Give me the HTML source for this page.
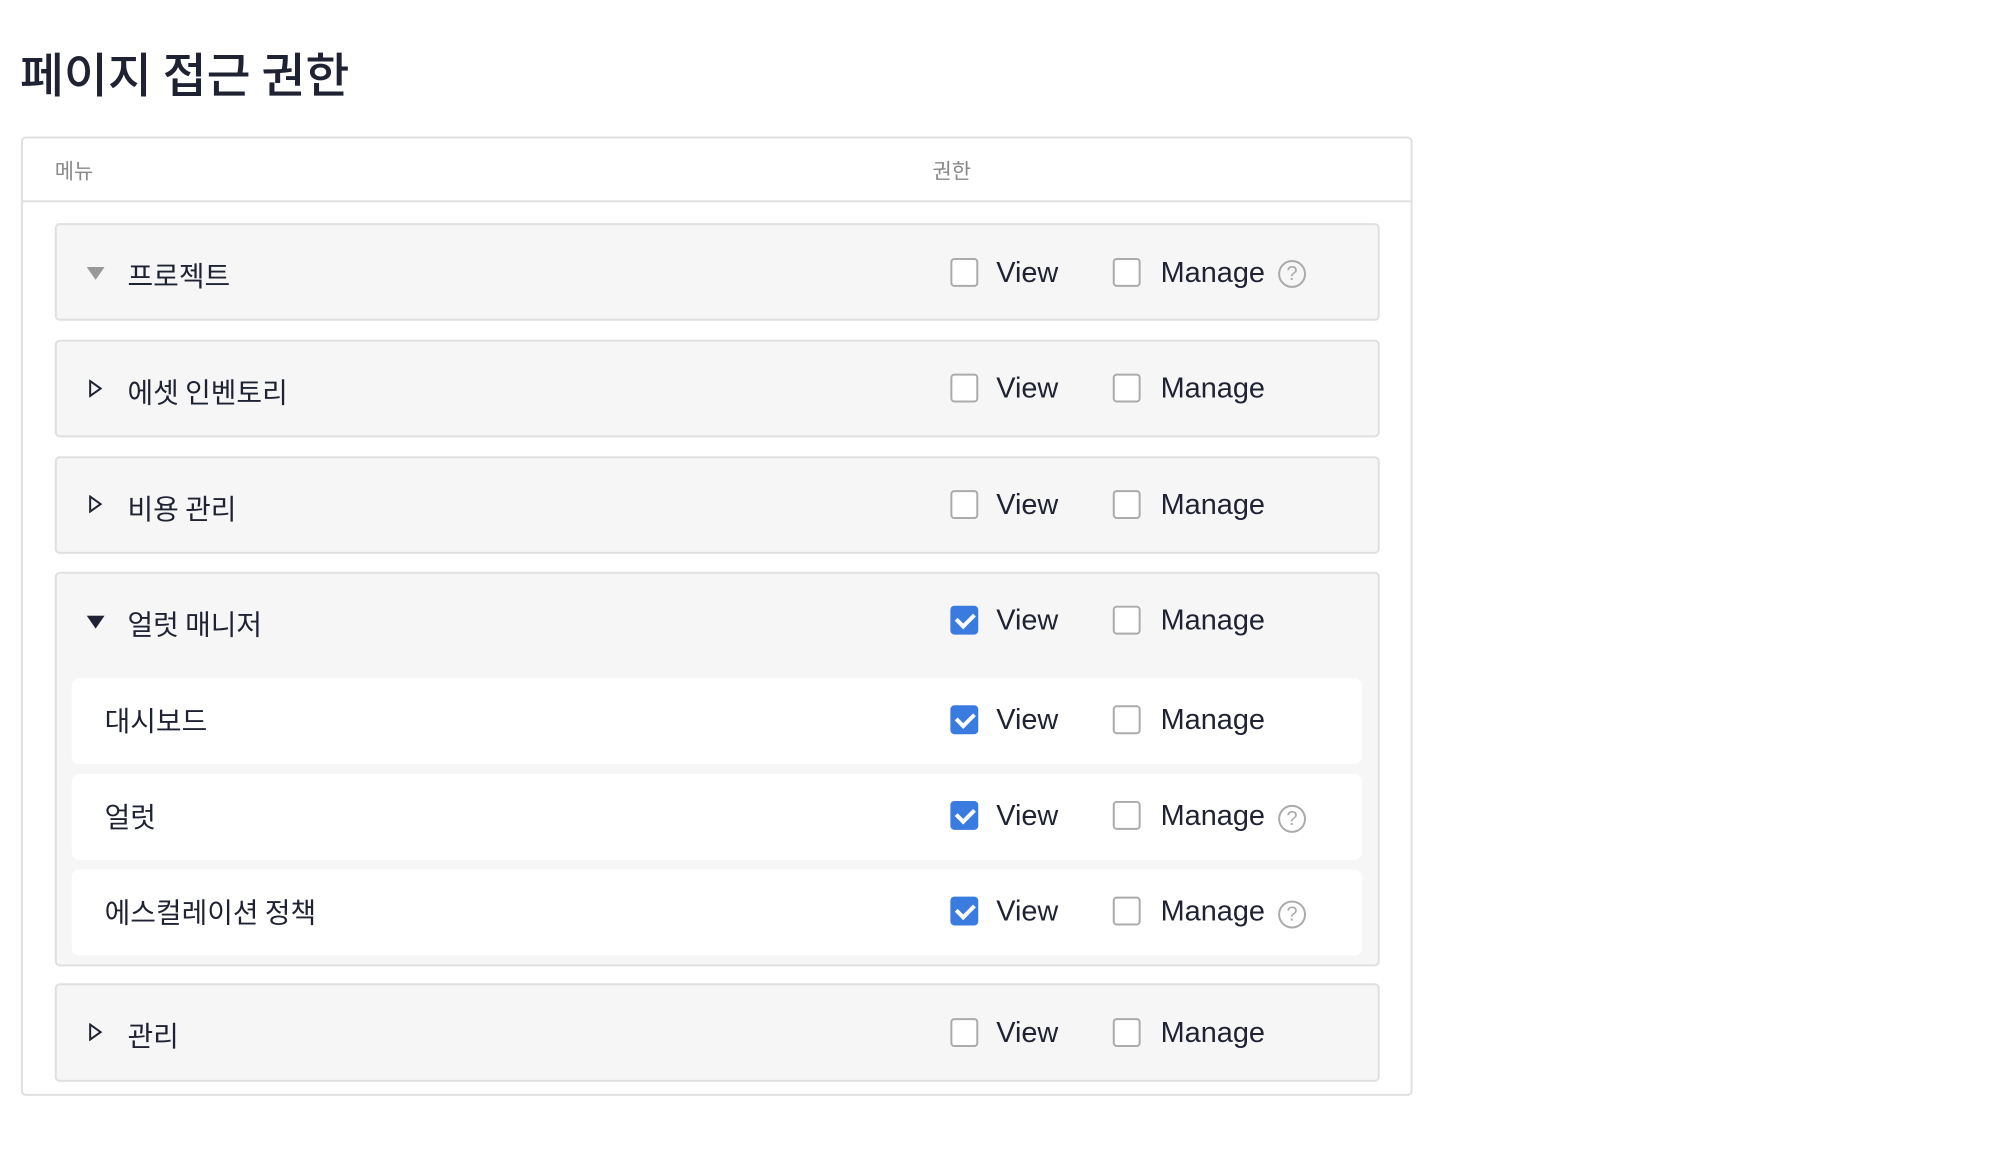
<!DOCTYPE html>
<html><head><meta charset="utf-8"><style>
*{box-sizing:border-box;margin:0;padding:0}
body{width:2000px;height:1160px;background:#fff;font-family:"Liberation Sans","Noto Sans CJK KR",sans-serif;color:#1f2233;position:relative;overflow:hidden}
#w{position:absolute;left:0;top:0;width:2000px;height:1160px;transform:scale(0.9962);transform-origin:0 0}
.a{position:absolute}
h1{position:absolute;left:20px;top:40px;font-size:48px;font-weight:500;font-family:"Noto Sans CJK KR",sans-serif;line-height:64px}
.outer{left:21px;top:137px;width:1397px;height:963px;border:2px solid #e0e0e0;border-radius:5px}
.hd{position:absolute;top:0;left:0;right:0;height:64px;border-bottom:2px solid #e0e0e0;color:#888;font-size:21px;font-family:"Noto Sans CJK KR",sans-serif}
.hd span{position:absolute;top:17px}
.grp{position:absolute;left:55px;width:1330px;background:#f6f6f6;border:2px solid #e0e0e0;border-radius:5px}
.sub{position:absolute;left:72px;width:1295px;height:86px;background:#fff;border-radius:7px}
.lbl{position:absolute;font-size:28px;font-family:"Noto Sans CJK KR",sans-serif;line-height:40px}
.cb{position:absolute;width:28px;height:29px;border:2px solid #ababab;border-radius:4px;background:#fff}
.cb.on{background:#3a7be0;border-color:#3a7be0}
.cb.on::after{content:"";position:absolute;left:7px;top:2px;width:8px;height:14px;border:solid #fff;border-width:0 4px 4px 0;transform:rotate(45deg)}
.t{position:absolute;font-size:29px;line-height:40px}
.help{position:absolute;width:28px;height:28px;border:2px solid #aaa;border-radius:50%;color:#aaa;font-size:20px;line-height:24px;text-align:center}
.tri{position:absolute}
</style></head><body><div id="w">
<h1>페이지 접근 권한</h1>
<div class="a outer"><div class="hd"><span style="left:32px">메뉴</span><span style="left:913px">권한</span></div></div>

<div class="grp" style="top:224px;height:98px"></div>
<div class="grp" style="top:341px;height:98px"></div>
<div class="grp" style="top:458px;height:98px"></div>
<div class="grp" style="top:574px;height:396px"></div>
<div class="grp" style="top:987px;height:99px"></div>
<div class="sub" style="top:681px"></div>
<div class="sub" style="top:777px"></div>
<div class="sub" style="top:873px"></div>

<svg class="tri" style="left:87px;top:268px" width="18" height="14"><path d="M0 0H18L9 13Z" fill="#999"/></svg>
<svg class="tri" style="left:89px;top:381px" width="14" height="18"><path d="M1.5 1.5L12 9L1.5 16.5Z" fill="none" stroke="#1f2233" stroke-width="2"/></svg>
<svg class="tri" style="left:89px;top:497px" width="14" height="18"><path d="M1.5 1.5L12 9L1.5 16.5Z" fill="none" stroke="#1f2233" stroke-width="2"/></svg>
<svg class="tri" style="left:87px;top:618px" width="18" height="14"><path d="M0 0H18L9 13Z" fill="#1f2233"/></svg>
<svg class="tri" style="left:89px;top:1027px" width="14" height="18"><path d="M1.5 1.5L12 9L1.5 16.5Z" fill="none" stroke="#1f2233" stroke-width="2"/></svg>

<div class="lbl" style="left:128px;top:256px">프로젝트</div>
<div class="lbl" style="left:128px;top:373px">에셋 인벤토리</div>
<div class="lbl" style="left:128px;top:490px">비용 관리</div>
<div class="lbl" style="left:128px;top:606px">얼럿 매니저</div>
<div class="lbl" style="left:105px;top:703px">대시보드</div>
<div class="lbl" style="left:105px;top:799px">얼럿</div>
<div class="lbl" style="left:105px;top:895px">에스컬레이션 정책</div>
<div class="lbl" style="left:128px;top:1019px">관리</div>

<div class="cb" style="left:954px;top:259px"></div><div class="t" style="left:1000px;top:254px">View</div>
<div class="cb" style="left:1117px;top:259px"></div><div class="t" style="left:1165px;top:254px">Manage</div>
<div class="help" style="left:1283px;top:261px">?</div>

<div class="cb" style="left:954px;top:375px"></div><div class="t" style="left:1000px;top:370px">View</div>
<div class="cb" style="left:1117px;top:375px"></div><div class="t" style="left:1165px;top:370px">Manage</div>

<div class="cb" style="left:954px;top:492px"></div><div class="t" style="left:1000px;top:487px">View</div>
<div class="cb" style="left:1117px;top:492px"></div><div class="t" style="left:1165px;top:487px">Manage</div>

<div class="cb on" style="left:954px;top:608px"></div><div class="t" style="left:1000px;top:603px">View</div>
<div class="cb" style="left:1117px;top:608px"></div><div class="t" style="left:1165px;top:603px">Manage</div>

<div class="cb on" style="left:954px;top:708px"></div><div class="t" style="left:1000px;top:703px">View</div>
<div class="cb" style="left:1117px;top:708px"></div><div class="t" style="left:1165px;top:703px">Manage</div>

<div class="cb on" style="left:954px;top:804px"></div><div class="t" style="left:1000px;top:799px">View</div>
<div class="cb" style="left:1117px;top:804px"></div><div class="t" style="left:1165px;top:799px">Manage</div>
<div class="help" style="left:1283px;top:808px">?</div>

<div class="cb on" style="left:954px;top:900px"></div><div class="t" style="left:1000px;top:895px">View</div>
<div class="cb" style="left:1117px;top:900px"></div><div class="t" style="left:1165px;top:895px">Manage</div>
<div class="help" style="left:1283px;top:904px">?</div>

<div class="cb" style="left:954px;top:1022px"></div><div class="t" style="left:1000px;top:1017px">View</div>
<div class="cb" style="left:1117px;top:1022px"></div><div class="t" style="left:1165px;top:1017px">Manage</div>
</div></body></html>
